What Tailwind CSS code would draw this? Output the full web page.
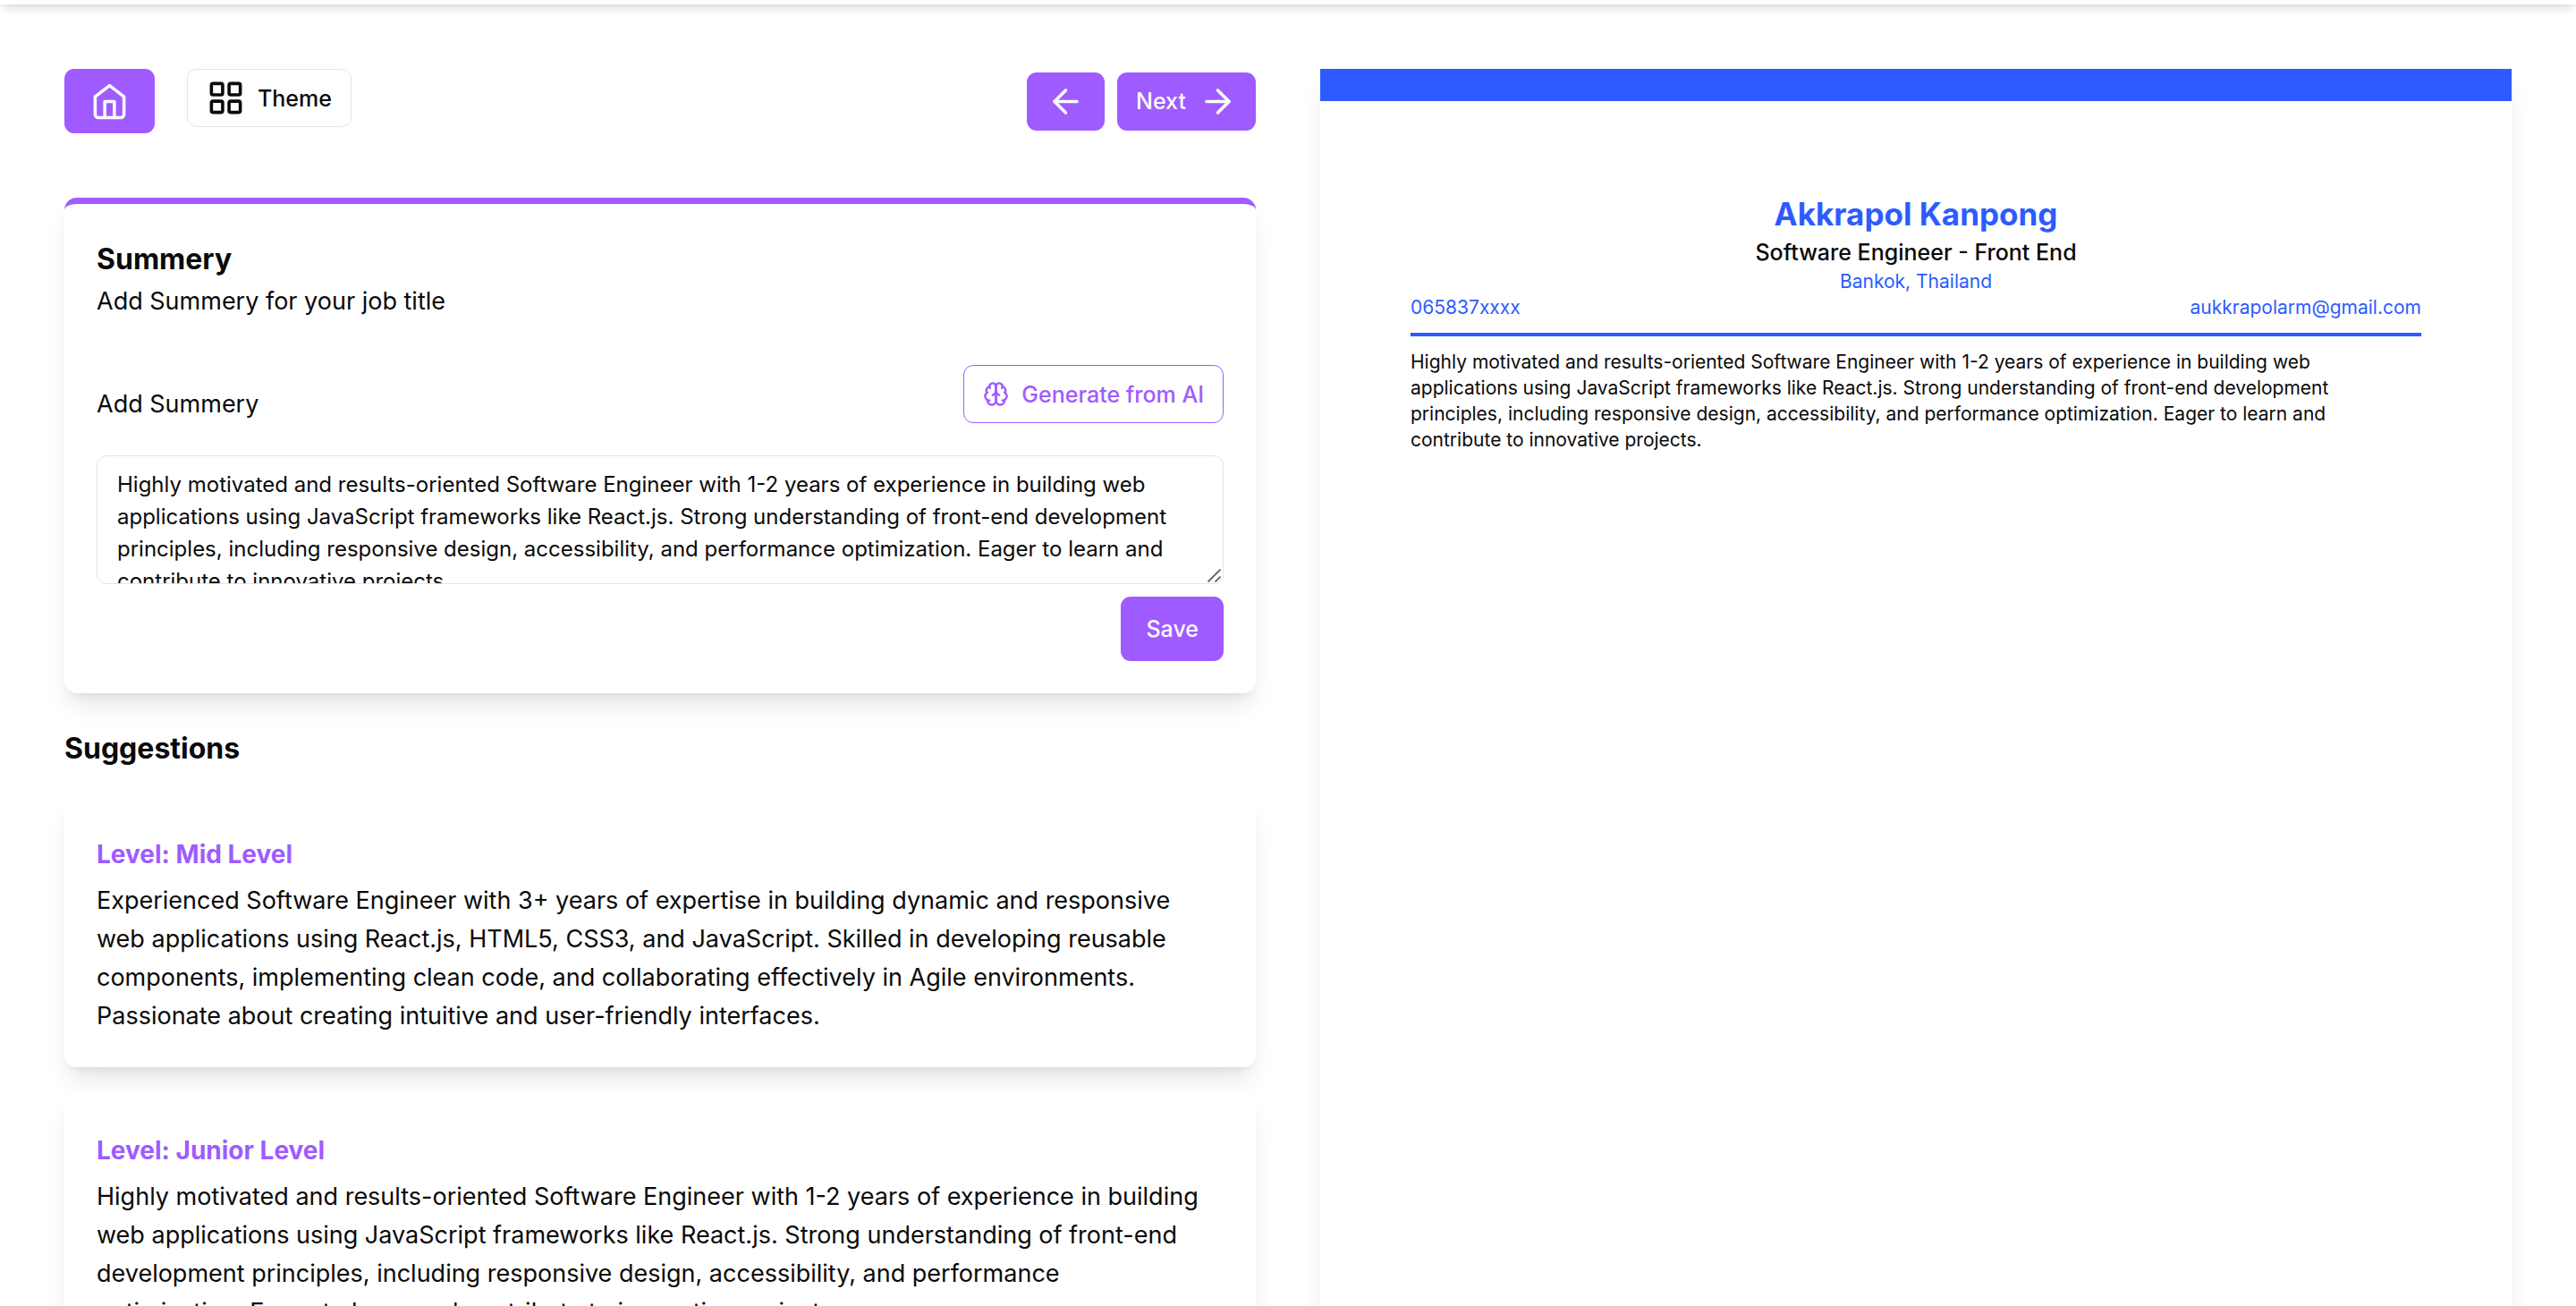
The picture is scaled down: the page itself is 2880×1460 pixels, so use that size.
<!DOCTYPE html>
<html lang="en">
<head>
<meta charset="utf-8">
<meta name="viewport" content="width=device-width, initial-scale=1">
<title>Resume Builder</title>
<script src="https://cdn.jsdelivr.net/npm/@tailwindcss/browser@4"></script>
</head>
<body class="h-screen overflow-x-hidden overflow-y-auto bg-white font-['Inter',sans-serif] text-[27px] leading-[43px] text-[#0a0a0a] [scrollbar-width:none]">
  <!-- Bottom edge of the site bar, which is scrolled out of view -->
  <header class="flex h-[5px] items-end">
    <div class="h-[108px] w-full shrink-0 bg-white shadow-[0_7px_11px_-2px_rgb(0_0_0/0.1),0_4px_7px_-4px_rgb(0_0_0/0.1)]"></div>
  </header>

  <main class="grid grid-cols-2 gap-[72px] p-[72px]">
    <div>
      <!-- Toolbar -->
      <div class="flex items-center justify-between">
        <div class="flex items-start gap-9">
          <a href="#" aria-label="Home" class="flex h-[72px] w-[101px] items-center justify-center rounded-[11px] bg-[#9f5bff] text-[#fafafa]">
            <svg class="size-[43px]" viewBox="0 0 24 24" fill="none" stroke="currentColor" stroke-width="2" stroke-linecap="round" stroke-linejoin="round"><path d="m3 9 9-7 9 7v11a2 2 0 0 1-2 2H5a2 2 0 0 1-2-2z"/><path d="M9 22V12h6v10"/></svg>
          </a>
          <button type="button" class="flex h-[65px] items-center gap-[14px] rounded-[11px] border border-[#e5e5e5] bg-white px-[21px] text-[25px] leading-9 font-medium">
            <svg class="size-[43px]" viewBox="0 0 24 24" fill="none" stroke="currentColor" stroke-width="2" stroke-linecap="round" stroke-linejoin="round"><rect width="7" height="7" x="3" y="3" rx="1"/><rect width="7" height="7" x="14" y="3" rx="1"/><rect width="7" height="7" x="14" y="14" rx="1"/><rect width="7" height="7" x="3" y="14" rx="1"/></svg>
            Theme
          </button>
        </div>
        <div class="flex items-center gap-[14px]">
          <button type="button" aria-label="Previous" class="flex h-[65px] items-center rounded-[11px] bg-[#9f5bff] px-[22px] text-[#fafafa]">
            <svg class="size-[43px]" viewBox="0 0 24 24" fill="none" stroke="currentColor" stroke-width="2" stroke-linecap="round" stroke-linejoin="round"><path d="m12 19-7-7 7-7"/><path d="M19 12H5"/></svg>
          </button>
          <button type="button" class="flex h-[65px] items-center gap-[14px] rounded-[11px] bg-[#9f5bff] px-[21px] text-[25px] leading-9 font-medium text-[#fafafa]">
            Next
            <svg class="size-[43px]" viewBox="0 0 24 24" fill="none" stroke="currentColor" stroke-width="2" stroke-linecap="round" stroke-linejoin="round"><path d="M5 12h14"/><path d="m12 5 7 7-7 7"/></svg>
          </button>
        </div>
      </div>

      <!-- Summary form -->
      <section class="mt-[72px] rounded-[14px] border-t-[7px] border-[#9f5bff] bg-white p-9 shadow-[0_18px_27px_-5px_rgb(0_0_0/0.1),0_7px_11px_-7px_rgb(0_0_0/0.1)]">
        <h2 class="text-[32px] leading-[51px] font-bold">Summery</h2>
        <p>Add Summery for your job title</p>
        <form class="mt-[50px]">
          <div class="flex items-end justify-between">
            <label for="summery">Add Summery</label>
            <button type="button" class="flex h-[65px] items-center gap-[14px] rounded-[11px] border border-[#9f5bff] bg-white px-[21px] text-[25px] leading-9 font-medium text-[#9f5bff]">
              <svg class="size-[29px]" viewBox="0 0 24 24" fill="none" stroke="currentColor" stroke-width="2" stroke-linecap="round" stroke-linejoin="round"><path d="M12 5a3 3 0 1 0-5.997.125 4 4 0 0 0-2.526 5.77 4 4 0 0 0 .556 6.588A4 4 0 1 0 12 18Z"/><path d="M12 5a3 3 0 1 1 5.997.125 4 4 0 0 1 2.526 5.77 4 4 0 0 1-.556 6.588A4 4 0 1 1 12 18Z"/><path d="M15 13a4.5 4.5 0 0 1-3-4 4.5 4.5 0 0 1-3 4"/><path d="M17.599 6.5a3 3 0 0 0 .399-1.375"/><path d="M6.003 5.125A3 3 0 0 0 6.401 6.5"/><path d="M3.477 10.896a4 4 0 0 1 .585-.396"/><path d="M19.938 10.5a4 4 0 0 1 .585.396"/><path d="M6 18a4 4 0 0 1-1.967-.516"/><path d="M19.967 17.484A4 4 0 0 1 18 18"/></svg>
              Generate from AI
            </button>
          </div>
          <div class="relative mt-9">
            <textarea id="summery" class="block h-36 w-full resize-none rounded-[11px] border border-[#e5e5e5] px-[22px] py-[14px] text-[24px] leading-9 [scrollbar-width:none]">Highly motivated and results-oriented Software Engineer with 1-2 years of experience in building web applications using JavaScript frameworks like React.js. Strong understanding of front-end development principles, including responsive design, accessibility, and performance optimization. Eager to learn and contribute to innovative projects.</textarea>
            <svg class="pointer-events-none absolute right-[3px] bottom-[2px] size-[15px]" viewBox="0 0 15 15" fill="none" stroke="#555" stroke-width="1.6"><path d="M0.5 14.5 14.5 0.5M8.5 14.5l6-6"/></svg>
          </div>
          <div class="mt-[14px] flex justify-end">
            <button type="submit" class="h-[72px] rounded-[11px] bg-[#9f5bff] px-7 text-[25px] leading-9 font-medium text-[#fafafa]">Save</button>
          </div>
        </form>
      </section>

      <!-- AI suggestions -->
      <section class="mt-9">
        <h2 class="text-[32px] leading-[51px] font-bold">Suggestions</h2>
        <div class="mt-[29px] grid gap-[29px]">
          <article class="rounded-[14px] bg-white px-9 pt-[43px] pb-9 shadow-[0_18px_27px_-5px_rgb(0_0_0/0.1),0_7px_11px_-7px_rgb(0_0_0/0.1)]">
            <h3 class="mb-2 text-[28px] font-bold text-[#9f5bff]">Level: Mid Level</h3>
            <p>Experienced Software Engineer with 3+ years of expertise in building dynamic and responsive web applications using React.js, HTML5, CSS3, and JavaScript. Skilled in developing reusable components, implementing clean code, and collaborating effectively in Agile environments. Passionate about creating intuitive and user-friendly interfaces.</p>
          </article>
          <article class="rounded-[14px] bg-white px-9 pt-[43px] pb-9 shadow-[0_18px_27px_-5px_rgb(0_0_0/0.1),0_7px_11px_-7px_rgb(0_0_0/0.1)]">
            <h3 class="mb-2 text-[28px] font-bold text-[#9f5bff]">Level: Junior Level</h3>
            <p>Highly motivated and results-oriented Software Engineer with 1-2 years of experience in building web applications using JavaScript frameworks like React.js. Strong understanding of front-end development principles, including responsive design, accessibility, and performance<br> optimization. Eager to learn and contribute to innovative projects.</p>
          </article>
        </div>
      </section>
    </div>

    <!-- Resume preview -->
    <section class="border-t-[36px] border-[#2d5bff] bg-white p-[101px] text-[21px] leading-[29px] shadow-[0_18px_27px_-5px_rgb(0_0_0/0.1),0_7px_11px_-7px_rgb(0_0_0/0.1)]">
      <h1 class="text-center text-[35px] leading-[50px] font-bold text-[#2d5bff]">Akkrapol Kanpong</h1>
      <h2 class="text-center text-[25px] leading-9 font-medium">Software Engineer - Front End</h2>
      <p class="text-center text-[#2d5bff]">Bankok, Thailand</p>
      <div class="flex justify-between text-[#2d5bff]">
        <span>065837xxxx</span>
        <span>aukkrapolarm@gmail.com</span>
      </div>
      <hr class="my-[14px] border-t-4 border-[#2d5bff]">
      <p>Highly motivated and results-oriented Software Engineer with 1-2 years of experience in building web applications using JavaScript frameworks like React.js. Strong understanding of front-end development principles, including responsive design, accessibility, and performance optimization. Eager to learn and contribute to innovative projects.</p>
    </section>
  </main>
</body>
</html>
